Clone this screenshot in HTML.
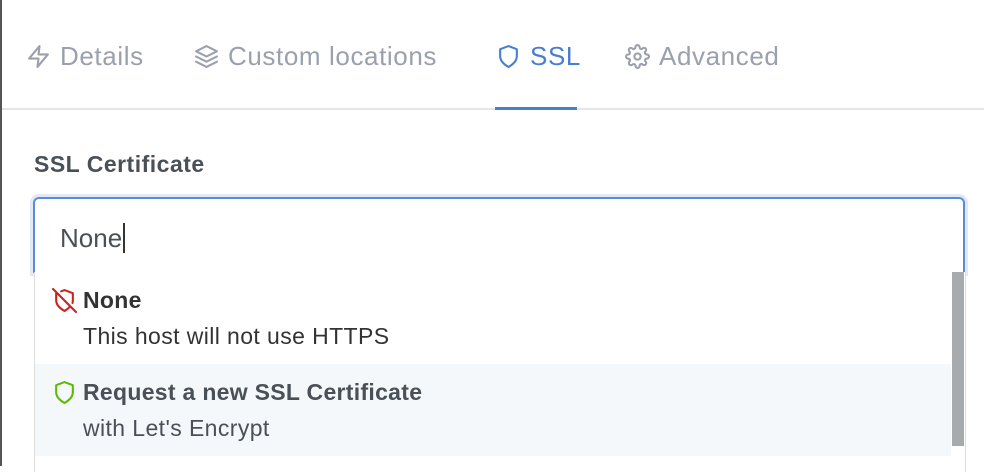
<!DOCTYPE html>
<html><head><style>
body{margin:0;width:984px;height:466px;background:#fff;font-family:"Liberation Sans",sans-serif;position:relative;overflow:hidden}
.l{position:absolute;left:0;top:0;width:2px;height:466px;background:#555}
.tab{position:absolute;top:41px;font-size:26px;letter-spacing:0.6px;color:#9aa0ac;display:flex;align-items:center;gap:9px;white-space:nowrap}
.tab svg{width:25px;height:25px;fill:none;stroke:currentColor;stroke-width:2;stroke-linecap:round;stroke-linejoin:round}
.hr{position:absolute;left:2px;right:0;top:108px;height:2px;background:#e3e5e8}
.ul{position:absolute;left:495px;width:82px;top:107px;height:3px;background:#467fcf}
.lab{position:absolute;left:34px;top:151px;font-size:23px;letter-spacing:0.5px;font-weight:bold;color:#495057}
.inp{position:absolute;left:33px;top:197px;width:928px;height:73px;border:2px solid #5b8ad6;border-bottom:1px solid #e6e6e6;border-radius:6px 6px 0 0;box-shadow:0 0 0 3px #e1e9f6}
.inp span{position:absolute;left:25px;top:24px;font-size:26px;color:#495057;border-right:2px solid #333;padding-right:1px;line-height:30px}
.dd{position:absolute;left:34px;top:272px;width:930px;height:200px;background:#fff;border-left:1px solid #ddd;border-right:1px solid #ddd}
.sb{position:absolute;right:1px;top:0;width:12px;height:174px;background:#a8abae}
.opt{position:absolute;left:0;width:916px;height:92px}
.opt b{position:absolute;left:48px;top:15px;font-size:23px;letter-spacing:0.3px;color:#333}
.opt i{position:absolute;left:48px;top:51px;font-size:23px;letter-spacing:0.4px;font-style:normal;color:#333}
.opt svg{position:absolute;left:17px;top:16px;width:25px;height:25px;fill:none;stroke-width:2;stroke-linecap:round;stroke-linejoin:round}
</style></head><body>
<div class="l"></div>
<div class="tab" style="left:26px"><svg viewBox="0 0 24 24"><path d="M13 2L3 14h9l-1 8 10-12h-9l1-8z"/></svg>Details</div>
<div class="tab" style="left:194px"><svg viewBox="0 0 24 24"><path d="M12 2L2 7l10 5 10-5-10-5z"/><path d="M2 17l10 5 10-5"/><path d="M2 12l10 5 10-5"/></svg>Custom locations</div>
<div class="tab" style="left:496px;color:#467fcf"><svg viewBox="0 0 24 24"><path d="M12 22s8-4 8-10V5l-8-3-8 3v7c0 6 8 10 8 10z"/></svg>SSL</div>
<div class="tab" style="left:625px"><svg viewBox="0 0 24 24"><circle cx="12" cy="12" r="3"/><path d="M19.4 15a1.65 1.65 0 00.33 1.82l.06.06a2 2 0 11-2.830 2.83l-.06-.06a1.65 1.65 0 00-1.820-.33 1.65 1.65 0 00-1 1.51V21a2 2 0 11-4 0v-.09A1.65 1.65 0 009 19.4a1.65 1.65 0 00-1.82.33l-.06.06a2 2 0 11-2.83-2.83l.06-.06a1.65 1.65 0 00.33-1.82 1.65 1.65 0 00-1.51-1H3a2 2 0 110-4h.09A1.65 1.65 0 004.6 9a1.65 1.65 0 00-.33-1.82l-.06-.06a2 2 0 112.83-2.83l.06.06a1.65 1.65 0 001.82.33H9a1.65 1.65 0 001-1.51V3a2 2 0 114 0v.09a1.65 1.65 0 001 1.51 1.65 1.65 0 001.82-.33l.06-.06a2 2 0 112.83 2.83l-.06.06a1.65 1.65 0 00-.33 1.82V9a1.65 1.65 0 001.51 1H21a2 2 0 110 4h-.09a1.65 1.65 0 00-1.51 1z"/></svg>Advanced</div>
<div class="hr"></div><div class="ul"></div>
<div class="lab">SSL Certificate</div>
<div class="inp"><span>None</span></div>
<div class="dd">
<div class="sb"></div>
<div class="opt" style="top:0"><svg viewBox="0 0 24 24" stroke="#cd201f"><path d="M19.7 14.4A9 9 0 0020 12V5l-8-3-3.2 1.2M4.7 4.7L4 5v7c0 6 8 10 8 10a20 20 0 005.6-4.4M1 1l22 22"/></svg><b>None</b><i>This host will not use HTTPS</i></div>
<div class="opt" style="top:92px;background:#f5f8fb"><svg viewBox="0 0 24 24" stroke="#5eba00"><path d="M12 22s8-4 8-10V5l-8-3-8 3v7c0 6 8 10 8 10z"/></svg><b style="color:#495057">Request a new SSL Certificate</b><i style="color:#495057">with Let's Encrypt</i></div>
</div>
</body></html>
